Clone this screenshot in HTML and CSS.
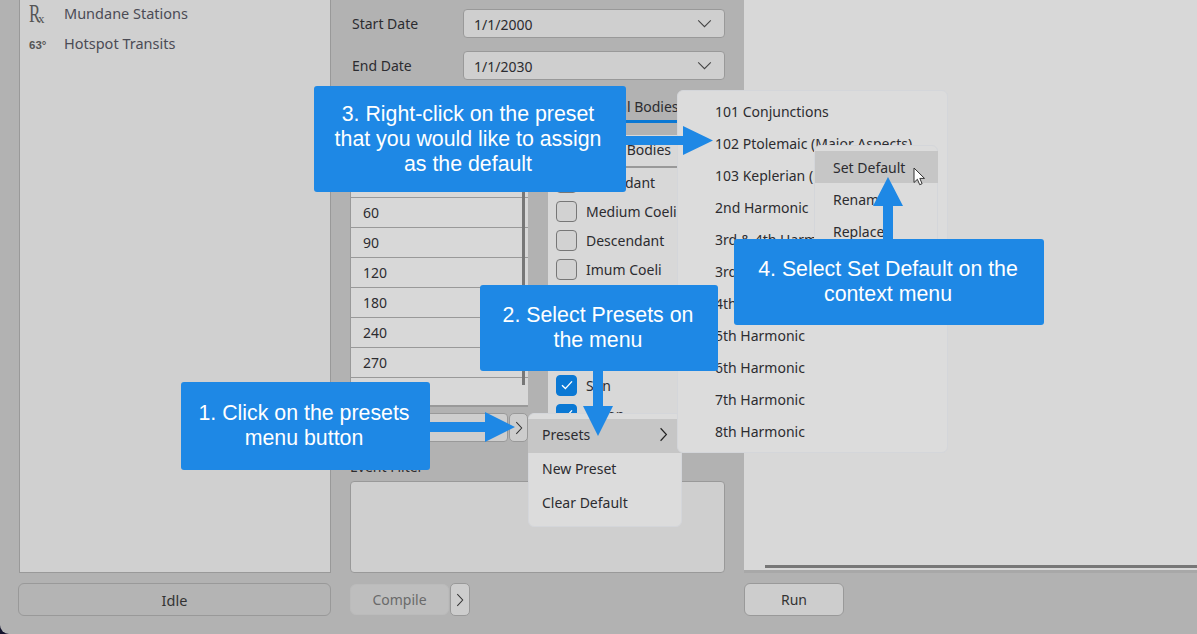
FILE: index.html
```html
<!DOCTYPE html>
<html lang="en">
<head>
  <meta charset="UTF-8">
  <title>Transit Search</title>
  <link rel="stylesheet" href="styles.css">
</head>
<body>
  <div class="app">
    <!-- Left column: search types -->
    <div class="column column-left">
      <div class="type-panel">
        <div class="type-row"><span class="type-icon type-rx"><span class="rx-r">R</span><span class="rx-x">x</span></span><span class="type-name">Mundane Stations</span></div>
        <div class="type-row"><span class="type-icon type-deg">63°</span><span class="type-name">Hotspot Transits</span></div>
      </div>
      <div class="footer">
        <button class="btn btn-idle">Idle</button>
      </div>
    </div>

    <!-- Middle column: search options -->
    <div class="column column-middle">
      <div class="options">
        <div class="date-row">
          <span class="date-label">Start Date</span>
          <div class="select"><span class="select-value">1/1/2000</span>
            <svg class="select-arrow" viewBox="0 0 16 10"><path d="M1 1.5l7 7 7-7"/></svg>
          </div>
        </div>
        <div class="date-row">
          <span class="date-label">End Date</span>
          <div class="select"><span class="select-value">1/1/2030</span>
            <svg class="select-arrow" viewBox="0 0 16 10"><path d="M1 1.5l7 7 7-7"/></svg>
          </div>
        </div>

        <div class="picker">
          <div class="picker-left">
            <div class="degree-list">
              <div class="degree-head">Aspects</div>
              <div class="degree-row">0</div>
              <div class="degree-row">30</div>
              <div class="degree-row">60</div>
              <div class="degree-row">90</div>
              <div class="degree-row">120</div>
              <div class="degree-row">180</div>
              <div class="degree-row">240</div>
              <div class="degree-row">270</div>
              <div class="degree-row"></div>
              <div class="degree-scroll"></div>
            </div>
            <div class="preset-row">
              <div class="preset-input"></div>
              <button class="btn-chevron preset-btn">
                <svg viewBox="0 0 10 18"><path d="M1.5 1.5l7 7.5-7 7.5"/></svg>
              </button>
            </div>
          </div>
          <div class="picker-right">
            <div class="tabs">
              <span class="tab">Celestial Bodies</span>
            </div>
            <div class="bodies">
              <div class="bodies-head">Celestial Bodies</div>
              <label class="check-row"><span class="check"></span>Ascendant</label>
              <label class="check-row"><span class="check"></span>Medium Coeli</label>
              <label class="check-row"><span class="check"></span>Descendant</label>
              <label class="check-row"><span class="check"></span>Imum Coeli</label>
              <label class="check-row"><span class="check"></span>Vertex</label>
              <label class="check-row"><span class="check"></span>Equatorial Asc</label>
              <label class="check-row"><span class="check"></span>Node</label>
              <label class="check-row"><span class="check check-on"><svg viewBox="0 0 12 10"><path d="M1 5.2l3.4 3.4L11 1.4"/></svg></span>Sun</label>
              <label class="check-row"><span class="check check-on"><svg viewBox="0 0 12 10"><path d="M1 5.2l3.4 3.4L11 1.4"/></svg></span>Moon</label>
            </div>
          </div>
        </div>

        <div class="filter-label">Event Filter</div>
        <div class="filter-box"></div>
      </div>
      <div class="footer">
        <button class="btn btn-compile">Compile</button>
        <button class="btn-chevron compile-more">
          <svg viewBox="0 0 10 18"><path d="M1.5 1.5l7 7.5-7 7.5"/></svg>
        </button>
      </div>
    </div>

    <!-- Right column: results -->
    <div class="column column-right">
      <div class="results">
        <div class="results-scroll"></div>
        <div class="results-edge"></div>
      </div>
      <div class="footer">
        <button class="btn btn-run">Run</button>
      </div>
    </div>
  </div>

  <!-- Popup menus -->
  <div class="menu menu-main">
    <div class="menu-item menu-item-active">Presets
      <svg class="menu-chevron" viewBox="0 0 10 18"><path d="M1.5 1.5l7 7.5-7 7.5"/></svg>
    </div>
    <div class="menu-item">New Preset</div>
    <div class="menu-item">Clear Default</div>
  </div>

  <div class="menu menu-presets">
    <div class="preset-item">101 Conjunctions</div>
    <div class="preset-item">102 Ptolemaic (Major Aspects)</div>
    <div class="preset-item">103 Keplerian (Minor Aspects)</div>
    <div class="preset-item">2nd Harmonic</div>
    <div class="preset-item">3rd &amp; 4th Harmonic</div>
    <div class="preset-item">3rd Harmonic</div>
    <div class="preset-item">4th Harmonic</div>
    <div class="preset-item">5th Harmonic</div>
    <div class="preset-item">6th Harmonic</div>
    <div class="preset-item">7th Harmonic</div>
    <div class="preset-item">8th Harmonic</div>
  </div>

  <div class="menu menu-context">
    <div class="context-item context-item-active">Set Default</div>
    <div class="context-item">Rename</div>
    <div class="context-item">Replace</div>
  </div>

  <svg class="cursor" viewBox="0 0 13 19"><path d="M1 1v14.5l3.4-3.2 2.3 5.4 2.4-1-2.3-5.3h4.7z"/></svg>

  <!-- Tutorial callouts and arrows -->
  <svg class="arrows" viewBox="0 0 1197 634">
    <path d="M430 422h55v-10l30 15-30 15v-10h-55z"/>
    <path d="M593 371v35h-10l15 30 15-30h-10v-35z"/>
    <path d="M626 136h57v-10l30 14.5-30 14.5v-10h-57z"/>
    <path d="M883 239v-33h-10l15-29 15 29h-10v33z"/>
  </svg>

  <div class="callout callout-1">1. Click on the presets menu button</div>
  <div class="callout callout-2">2. Select Presets on the menu</div>
  <div class="callout callout-3">3. Right-click on the preset that you would like to assign as the default</div>
  <div class="callout callout-4">4. Select Set Default on the context menu</div>
</body>
</html>
```

FILE: styles.css
```css
html, body {
  margin: 0;
  padding: 0;
  height: 100%;
  overflow: hidden;
}
body {
  background-color: #14142e;
  font-family: "Noto Sans", "Open Sans", sans-serif;
  font-size: 14px;
  color: #2c2c30;
}
.app {
  display: flex;
  gap: 19px;
  height: 634px;
  padding-left: 19px;
  box-sizing: border-box;
  background-color: #b2b2b2;
  border-bottom-left-radius: 9px;
}
.column {
  display: flex;
  flex-direction: column;
}
.column-left { width: 312px; }
.column-middle { width: 375px; }
.column-right { flex: 1; }
.footer {
  display: flex;
  align-items: center;
  gap: 1px;
  height: 33px;
  margin: 10px 0 18px;
}

/* Left column */
.type-panel {
  flex: 1;
  box-sizing: border-box;
  background-color: #d0d0d0;
  border: 1px solid #999;
  border-top: none;
}
.type-row {
  display: flex;
  align-items: center;
  height: 30px;
  font-size: 14.5px;
  color: #4b4b55;
}
.type-name {
  padding-bottom: 4px;
}
.type-icon {
  width: 35px;
  margin-left: 9px;
  color: #555;
}
.type-rx {
  display: flex;
  height: 30px;
  font-family: "Liberation Serif", serif;
  line-height: 28px;
}
.rx-r {
  display: inline-block;
  width: 9px;
  font-size: 25px;
  transform: scaleX(0.68);
  transform-origin: left center;
}
.rx-x {
  font-size: 13px;
  line-height: 38px;
}
.type-deg {
  font-family: "Liberation Sans", sans-serif;
  font-size: 11.5px;
  font-weight: bold;
}

/* Buttons */
.btn {
  box-sizing: border-box;
  height: 33px;
  font-family: inherit;
  font-size: 14px;
  color: #333;
  background-color: #cdcdcd;
  border: 1px solid #999;
  border-radius: 6px;
  padding: 0;
}
.btn-idle {
  width: 313px;
  margin-left: -1px;
  padding-top: 1px;
  font-size: 14.5px;
  background-color: #b4b4b4;
}
.btn-compile {
  width: 99px;
  height: 31px;
  color: #6a6a6a;
  background-color: #bebebe;
  border-color: #bbb;
}
.btn-run {
  width: 100px;
}
.btn-chevron {
  display: flex;
  align-items: center;
  justify-content: center;
  box-sizing: border-box;
  padding: 0;
  background-color: #cdcdcd;
  border: 1px solid #999;
  border-radius: 5px;
}
.btn-chevron svg {
  width: 8px;
  height: 14px;
  fill: none;
  stroke: #333;
  stroke-width: 1.3;
}
.compile-more {
  width: 20px;
  height: 33px;
}

/* Middle column */
.options {
  flex: 1;
  display: flex;
  flex-direction: column;
  padding-top: 9px;
  min-height: 0;
}
.date-row {
  display: flex;
  align-items: center;
  height: 29px;
  margin-bottom: 13px;
}
.date-label {
  width: 113px;
  padding-left: 2px;
  box-sizing: border-box;
}
.select {
  flex: 1;
  display: flex;
  align-items: center;
  justify-content: space-between;
  height: 29px;
  box-sizing: border-box;
  padding: 0 12px 0 10px;
  background-color: #cfcfcf;
  border: 1px solid #999;
  border-radius: 4px;
}
.select-value {
  padding-top: 1px;
}
.select-arrow {
  width: 15px;
  height: 9px;
  fill: none;
  stroke: #444;
  stroke-width: 1.2;
}
.picker {
  display: flex;
  gap: 20px;
  margin-top: 2px;
}
.picker-left {
  width: 178px;
}
.degree-list {
  position: relative;
  box-sizing: border-box;
  height: 312px;
  background-color: #d8d8d8;
  border-bottom: 2px solid #999;
  border-left: 1px solid #999;
}
.degree-head {
  height: 42px;
}
.degree-row {
  box-sizing: border-box;
  height: 30px;
  line-height: 29px;
  padding-left: 12px;
  border-top: 1px solid #999;
}
.degree-scroll {
  position: absolute;
  top: 0;
  right: 3px;
  width: 3px;
  height: 290px;
  background-color: #777;
}
.preset-row {
  display: flex;
  gap: 1px;
  height: 29px;
  margin-top: 6px;
}
.preset-input {
  flex: 1;
  background-color: #cecece;
  border: 1px solid #999;
  border-radius: 4px;
}
.preset-btn {
  width: 19px;
  height: 29px;
}
.picker-right {
  flex: 1;
}
.tabs {
  box-sizing: border-box;
  height: 28px;
  margin-bottom: 12px;
  border-bottom: 3px solid #0a78d4;
}
.tab {
  display: block;
  text-align: center;
  padding-right: 19px;
  line-height: 24px;
}
.bodies {
  box-sizing: border-box;
  height: 307px;
  padding: 0 8px;
  overflow: hidden;
  background-color: #d8d8d8;
}
.bodies-head {
  box-sizing: border-box;
  height: 33px;
  padding-right: 34px;
  line-height: 29px;
  text-align: center;
  margin: 0 -8px;
  border-bottom: 2px solid #999;
}
.check-row {
  display: flex;
  align-items: center;
  gap: 9px;
  height: 29px;
  padding-bottom: 1px;
  box-sizing: border-box;
}
.check {
  flex: none;
  display: flex;
  align-items: center;
  justify-content: center;
  box-sizing: border-box;
  width: 21px;
  height: 21px;
  background-color: #d2d2d2;
  border: 1px solid #777;
  border-radius: 4px;
}
.check-on {
  background-color: #0a78d4;
  border-color: #0a78d4;
}
.check-on svg {
  width: 12px;
  height: 10px;
  fill: none;
  stroke: #fff;
  stroke-width: 1.4;
}
.filter-label {
  margin-top: 15px;
  height: 24px;
  line-height: 20px;
}
.filter-box {
  flex: 1;
  background-color: #cfcfcf;
  border: 1px solid #999;
  border-radius: 4px;
}

/* Right column */
.results {
  flex: 1;
  display: flex;
  flex-direction: column;
  justify-content: flex-end;
  background-color: #d8d8d8;
}
.results-scroll {
  height: 3px;
  margin: 0 0 2px 21px;
  background-color: #777;
}
.results-edge {
  height: 3px;
  background-color: #a8a8a8;
}

/* Popup menus */
.menu {
  position: absolute;
  box-sizing: border-box;
  background-color: #dcdcdc;
  border: 1px solid #d4d6da;
  border-radius: 6px;
}
.menu-main {
  left: 528px;
  top: 413px;
  width: 154px;
  height: 114px;
  padding-top: 5px;
}
.menu-item {
  display: flex;
  align-items: center;
  justify-content: space-between;
  box-sizing: border-box;
  height: 34px;
  padding: 0 14px 3px;
  margin-left: -1px;
  margin-right: -1px;
}
.menu-item-active {
  background-color: #c6c6c6;
}
.menu-chevron {
  width: 9px;
  height: 15px;
  fill: none;
  stroke: #222;
  stroke-width: 1.4;
}
.menu-presets {
  left: 677px;
  top: 90px;
  width: 271px;
  height: 363px;
  padding-top: 5px;
}
.preset-item {
  height: 32px;
  line-height: 32px;
  padding-left: 37px;
  white-space: nowrap;
}
.menu-context {
  left: 814px;
  top: 145px;
  width: 124px;
  height: 110px;
  padding-top: 5px;
}
.context-item {
  box-sizing: border-box;
  height: 32px;
  line-height: 32px;
  padding: 1px 0 0 18px;
  margin-right: -1px;
}
.context-item-active {
  background-color: #c6c6c6;
}
.cursor {
  position: absolute;
  left: 913px;
  top: 167px;
  width: 13px;
  height: 19px;
  fill: #fff;
  stroke: #333;
  stroke-width: 1;
}

/* Tutorial overlay */
.arrows {
  position: absolute;
  left: 0;
  top: 0;
  width: 1197px;
  height: 634px;
  fill: #1e88e5;
}
.callout {
  position: absolute;
  display: flex;
  align-items: center;
  justify-content: center;
  box-sizing: border-box;
  text-align: center;
  font-family: "Liberation Sans", sans-serif;
  font-size: 21.33px;
  line-height: 25px;
  color: #fff;
  background-color: #1e88e5;
  border-radius: 3px;
}
.callout-1 { left: 181px; top: 382px; width: 249px; height: 88px; padding: 0 18px 0 15px; }
.callout-2 { left: 480px; top: 285px; width: 238px; height: 86px; padding: 0 20px 0 18px; }
.callout-3 { left: 314px; top: 86px; width: 312px; height: 106px; padding: 0 22px 0 18px; }
.callout-4 { left: 734px; top: 239px; width: 310px; height: 86px; padding: 0 22px 0 20px; }
```
